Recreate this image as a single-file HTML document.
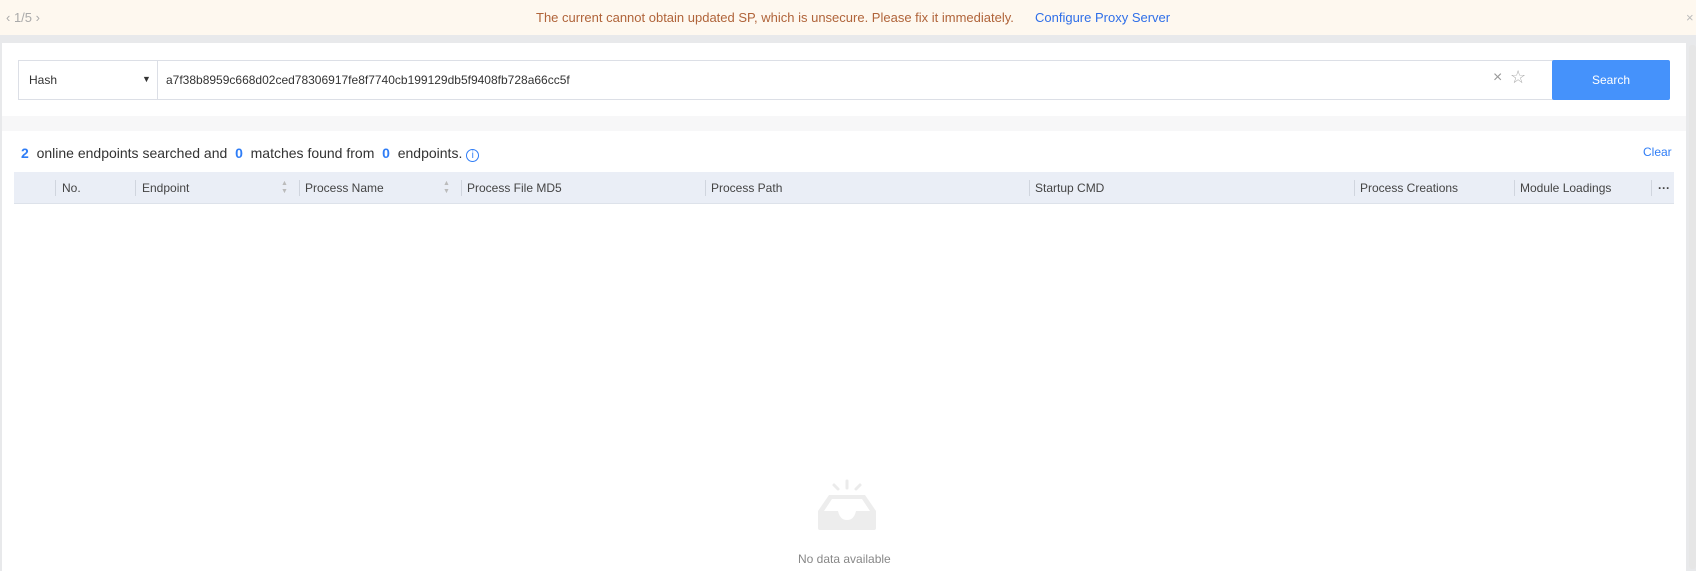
<!DOCTYPE html>
<html><head><meta charset="utf-8"><style>
*{box-sizing:border-box;margin:0;padding:0}
body{width:1696px;height:569px;overflow:hidden;background:#e8e9eb;font-family:"Liberation Sans",Arial,sans-serif;position:relative}
.banner{position:absolute;left:0;top:0;width:1696px;height:35px;background:#fef8ef;font-size:13px;color:#999}
.banner .t{position:absolute;top:10px}
.p1{position:absolute;left:2px;top:43px;width:1684px;height:73px;background:#fff}
.gap{position:absolute;left:2px;top:116px;width:1684px;height:15px;background:#f7f7f8}
.p2{position:absolute;left:2px;top:131px;width:1684px;height:440px;background:#fff}
.box{position:absolute;left:18px;top:60px;width:1536px;height:40px;border:1px solid #dcdfe6;background:#fff}
.sel{position:absolute;left:0;top:0;width:139px;height:38px;border-right:1px solid #dcdfe6;font-size:12px;color:#333;padding:12px 0 0 10px}
.btn{position:absolute;left:1552px;top:60px;width:118px;height:40px;background:#4592fb;color:#fff;font-size:12px;text-align:center;line-height:40px;border-radius:2px}
.th{position:absolute;left:14px;top:172px;width:1660px;height:32px;background:#eaeef6;border-bottom:1px solid #dde2ea;font-size:12px;color:#444}
.th span{position:absolute;top:9px}
.th i{position:absolute;top:8px;width:1px;height:16px;background:#d0d5de}
.b{color:#2f7df6;font-weight:bold}
</style></head><body>
<div class="banner">
<span class="t" style="left:6px;color:#aaa">&#x2039; 1/5 &#x203A;</span>
<span class="t" style="left:536px;color:#b0643a">The current cannot obtain updated SP, which is unsecure. Please fix it immediately.</span>
<span class="t" style="left:1035px;color:#2f6fe8">Configure Proxy Server</span>
<span class="t" style="left:1686px;color:#bbb">×</span>
</div>
<div class="p1"></div>
<div class="gap"></div>
<div class="p2"></div>
<div style="position:absolute;left:1689px;top:45px;width:7px;height:524px;background:#e6e6e6;border-radius:3px"></div>
<div class="box"><div class="sel">Hash<span style="position:absolute;left:123px;top:13px;font-size:9px">&#9660;</span></div>
<span style="position:absolute;left:147px;top:12px;font-size:12px;color:#333">a7f38b8959c668d02ced78306917fe8f7740cb199129db5f9408fb728a66cc5f</span>
<span style="position:absolute;left:1474px;top:8px;font-size:16px;color:#999">×</span>
<span style="position:absolute;left:1491px;top:6px;font-size:18px;color:#aaa">☆</span>
</div>
<div class="btn">Search</div>
<div style="position:absolute;left:21px;top:145px;font-size:14px;color:#333;white-space:pre"><span class="b">2</span>  online endpoints searched and  <span class="b">0</span>  matches found from  <span class="b">0</span>  endpoints. <span style="color:#2f7df6;display:inline-block;width:13px;height:13px;border:1px solid #2f7df6;border-radius:50%;font-size:10px;text-align:center;line-height:12px;vertical-align:0">i</span></div>
<div style="position:absolute;left:1643px;top:145px;font-size:12px;color:#2f7df6">Clear</div>
<div class="th">
<i style="left:41px"></i><span style="left:48px">No.</span>
<i style="left:121px"></i><span style="left:128px">Endpoint</span><span style="left:267px;top:8px;font-size:7px;color:#bbb;line-height:8px">▲<br>▼</span>
<i style="left:285px"></i><span style="left:291px">Process Name</span><span style="left:429px;top:8px;font-size:7px;color:#bbb;line-height:8px">▲<br>▼</span>
<i style="left:447px"></i><span style="left:453px">Process File MD5</span>
<i style="left:691px"></i><span style="left:697px">Process Path</span>
<i style="left:1015px"></i><span style="left:1021px">Startup CMD</span>
<i style="left:1340px"></i><span style="left:1346px">Process Creations</span>
<i style="left:1500px"></i><span style="left:1506px">Module Loadings</span>
<i style="left:1637px"></i><span style="left:1644px;font-weight:bold">···</span>
</div>
<svg style="position:absolute;left:816px;top:478px" width="62" height="56" viewBox="0 0 62 56">
<g stroke="#ebebeb" stroke-width="3" stroke-linecap="round"><line x1="31" y1="3" x2="31" y2="10"/><line x1="18" y1="7" x2="22" y2="11"/><line x1="44" y1="7" x2="40" y2="11"/></g>
<path d="M13 17 H49 L60 33 V50 Q60 52 58 52 H4 Q2 52 2 50 V33 Z" fill="#ededed"/>
<path d="M8 33 H22 Q24 42 31 42 Q38 42 40 33 H54 L46 21 H16 Z" fill="#fff"/>
</svg>
<span style="position:absolute;left:798px;top:552px;font-size:12px;color:#888">No data available</span>
</body></html>
